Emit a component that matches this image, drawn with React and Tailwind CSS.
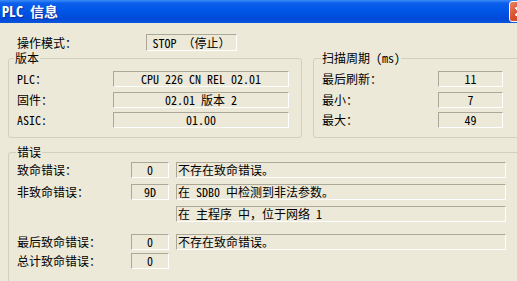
import React from 'react';

const sunken =
  'h-[16px] border border-[#aca899] border-b-white border-r-white bg-[#ece9d8] leading-[14px] whitespace-nowrap overflow-hidden';

function Box({ width, align = 'center', children }) {
  return (
    <div
      className={`${sunken} ${width} ${align === 'left' ? 'text-left pl-[1px]' : 'text-center'}`}
    >
      {children}
    </div>
  );
}

function Row({ label, labelWidth, boxWidth, value, className = '' }) {
  return (
    <div className={`flex items-center h-[16px] ${className}`}>
      <div className={`pl-[8px] ${labelWidth} whitespace-nowrap`}>{label}</div>
      <Box width={boxWidth}>{value}</Box>
    </div>
  );
}

function ErrorRow({ label, code, message, className = '' }) {
  return (
    <div className={`flex items-center h-[16px] ${className}`}>
      <div className="pl-[8px] w-[122px] whitespace-nowrap">{label}</div>
      {code !== undefined ? <Box width="w-[38px]">{code}</Box> : <div className="w-[38px]" />}
      {message !== undefined && (
        <div className="ml-[7px]">
          <Box width="w-[330px]" align="left">
            {message}
          </Box>
        </div>
      )}
    </div>
  );
}

export default function App() {
  return (
    <div className="w-[517px] h-[281px] overflow-hidden bg-[#ece9d8] flex flex-col text-[12px] leading-[16px] text-black font-['Noto_Sans_Mono_CJK_SC','Noto_Sans_CJK_SC',sans-serif]">
      {/* Title bar */}
      <div className="h-[23px] shrink-0 flex items-start bg-[linear-gradient(180deg,#3a8af6_0%,#0b5fec_14%,#0057e7_45%,#0049d8_85%,#0a58dc_100%)]">
        <div className="pl-[2px] pt-[2px] text-[14px] leading-[18px] font-bold text-white [text-shadow:1px_1px_#0b2f9a]">
          PLC 信息
        </div>
        <div className="ml-auto -mr-[13px] mt-[1px] w-[21px] h-[21px] rounded-[3px] border border-white bg-[linear-gradient(135deg,#e8876b_0%,#d9512c_45%,#c5401e_100%)] flex items-center justify-center">
          <svg width="11" height="11" viewBox="0 0 11 11">
            <path d="M1.5 1.5 L9.5 9.5 M9.5 1.5 L1.5 9.5" stroke="white" strokeWidth="2" />
          </svg>
        </div>
      </div>

      {/* Body */}
      <div className="flex-1 flex flex-col overflow-hidden">
        <div className="mt-[11px] flex items-center h-[17px]">
          <div className="pl-[17px] w-[146px] whitespace-nowrap">操作模式：</div>
          <div className="h-[17px] w-[91px] border border-[#aca899] border-b-white border-r-white text-center leading-[15px] whitespace-nowrap">
            STOP （停止）
          </div>
        </div>

        <div className="mt-[1px] flex pl-[8px] gap-[11px]">
          <fieldset className="w-[294px] h-[86px] shrink-0 border border-[#d0d0bf] rounded-[3px] p-0 m-0 min-w-0">
            <legend className="ml-[5px] px-[1px] leading-[12px]">版本</legend>
            <Row className="mt-[7px]" label="PLC：" labelWidth="w-[104px]" boxWidth="w-[176px]" value="CPU 226 CN REL 02.01" />
            <Row className="mt-[5px]" label="固件：" labelWidth="w-[104px]" boxWidth="w-[176px]" value="02.01 版本 2" />
            <Row className="mt-[4px]" label="ASIC:" labelWidth="w-[104px]" boxWidth="w-[176px]" value="01.00" />
          </fieldset>

          <fieldset className="w-[212px] h-[86px] shrink-0 border border-[#d0d0bf] rounded-[3px] p-0 m-0 min-w-0">
            <legend className="ml-[7px] px-[1px] leading-[12px]">扫描周期 (ms)</legend>
            <Row className="mt-[7px]" label="最后刷新：" labelWidth="w-[124px]" boxWidth="w-[65px]" value="11" />
            <Row className="mt-[5px]" label="最小：" labelWidth="w-[124px]" boxWidth="w-[65px]" value="7" />
            <Row className="mt-[4px]" label="最大：" labelWidth="w-[124px]" boxWidth="w-[65px]" value="49" />
          </fieldset>
        </div>

        <div className="mt-[8px] flex pl-[8px]">
          <fieldset className="w-[516px] h-[140px] shrink-0 border border-[#d0d0bf] rounded-[3px] p-0 m-0 min-w-0">
            <legend className="ml-[7px] px-[1px] leading-[12px]">错误</legend>
            <ErrorRow className="mt-[4px]" label="致命错误：" code="0" message="不存在致命错误。" />
            <ErrorRow className="mt-[6px]" label="非致命错误：" code="9D" message="在 SDB0 中检测到非法参数。" />
            <ErrorRow className="mt-[6px]" label="" message="在 主程序 中，位于网络 1" />
            <ErrorRow className="mt-[12px]" label="最后致命错误：" code="0" message="不存在致命错误。" />
            <ErrorRow className="mt-[3px]" label="总计致命错误：" code="0" />
          </fieldset>
        </div>
      </div>
    </div>
  );
}
